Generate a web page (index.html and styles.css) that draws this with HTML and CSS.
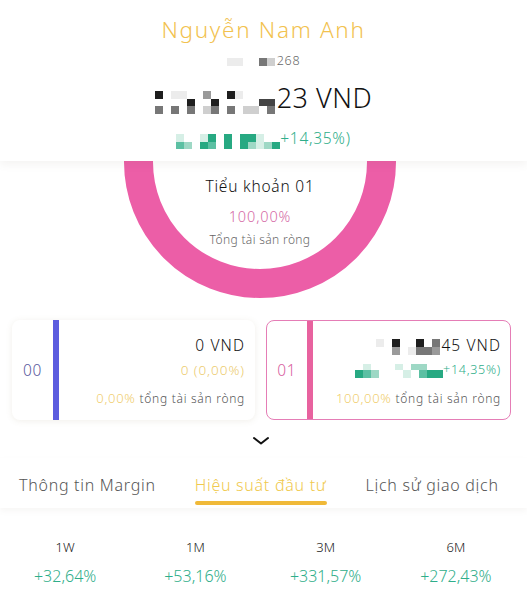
FILE: index.html
```html
<!DOCTYPE html>
<html lang="vi">
<head>
<meta charset="utf-8">
<link rel="stylesheet" href="styles.css">
</head>
<body>
<header class="head">
  <div class="name">Nguyễn Nam Anh</div>
  <div class="acct"><span class="mz mz6"><i class="b"></i><i class="b"></i><i></i><i></i><i class="e"></i><i class="c"></i></span>268</div>
  <div class="total"><span class="mz mz15"><i class="g"></i><i></i><i class="b"></i><i class="b"></i><i></i><i></i><i class="d"></i><i></i><i></i><i class="g"></i><i class="b"></i><i></i><i></i><i></i><i></i><i></i><i></i><i></i><i></i><i class="g"></i><i></i><i></i><i class="g"></i><i></i><i></i><i></i><i></i><i></i><i class="f"></i><i class="f"></i><i class="e"></i><i></i><i class="e"></i><i></i><i class="e"></i><i></i><i class="c"></i><i class="e"></i><i></i><i class="e"></i><i></i><i class="c"></i><i class="c"></i><i></i><i class="e"></i></span>23 VND</div>
  <div class="gain"><span class="mz mz13"><i class="t1"></i><i></i><i></i><i class="t1"></i><i class="t4"></i><i></i><i class="t4"></i><i></i><i class="t4"></i><i class="t4"></i><i class="t1"></i><i></i><i></i><i class="t3"></i><i class="t2"></i><i></i><i class="t4"></i><i class="t3"></i><i></i><i class="t4"></i><i></i><i class="t4"></i><i class="t2"></i><i class="t1"></i><i class="t2"></i><i class="t4"></i></span>+14,35%)</div>
</header>

<section class="donut">
  <div class="donut-title">Tiểu khoản 01</div>
  <div class="donut-pct">100,00%</div>
  <div class="donut-sub">Tổng tài sản ròng</div>
</section>

<section class="cards">
  <div class="card">
    <div class="code code-blue">00</div>
    <div class="bar bar-blue"></div>
    <div class="info">
      <div class="amt">0 VND</div>
      <div class="chg chg-gold">0 (0,00%)</div>
      <div class="share"><span class="gold">0,00%</span> tổng tài sản ròng</div>
    </div>
  </div>
  <div class="card card-active">
    <div class="code code-pink">01</div>
    <div class="bar bar-pink"></div>
    <div class="info">
      <div class="amt"><span class="mz mz8"><i class="b"></i><i></i><i class="g"></i><i></i><i></i><i class="g"></i><i></i><i class="e"></i><i></i><i></i><i class="d"></i><i></i><i class="b"></i><i class="e"></i><i class="e"></i><i class="d"></i></span>45 VND</div>
      <div class="chg chg-green"><span class="mz mz11"><i></i><i class="t1"></i><i></i><i></i><i></i><i class="t1"></i><i></i><i class="t2"></i><i class="t2"></i><i></i><i></i><i class="t4"></i><i class="t3"></i><i class="t2"></i><i></i><i></i><i></i><i class="t1"></i><i></i><i class="t3"></i><i class="t4"></i><i class="t4"></i></span>+14,35%)</div>
      <div class="share"><span class="gold">100,00%</span> tổng tài sản ròng</div>
    </div>
  </div>
</section>

<div class="chev">
  <svg width="18" height="10" viewBox="0 0 18 10"><path d="M2 2 L9 7.5 L16 2" fill="none" stroke="#111" stroke-width="2" stroke-linecap="round" stroke-linejoin="round"/></svg>
</div>

<nav class="tabs">
  <div class="tab">Thông tin Margin</div>
  <div class="tab tab-active">Hiệu suất đầu tư</div>
  <div class="tab">Lịch sử giao dịch</div>
</nav>

<section class="stats">
  <div class="stat"><div class="stat-l">1W</div><div class="stat-v">+32,64%</div></div>
  <div class="stat"><div class="stat-l">1M</div><div class="stat-v">+53,16%</div></div>
  <div class="stat"><div class="stat-l">3M</div><div class="stat-v">+331,57%</div></div>
  <div class="stat"><div class="stat-l">6M</div><div class="stat-v">+272,43%</div></div>
</section>
</body>
</html>
```

FILE: styles.css
```css
* { box-sizing: border-box; }
html, body { margin: 0; padding: 0; background: #fff; }
body {
  font-family: "Noto Sans", Lato, "DejaVu Sans", sans-serif;
  font-weight: 300;
  letter-spacing: 0.045em;
  color: #1a1a1a;
  width: 527px;
  overflow: hidden;
}

/* mosaic (pixelated hidden digits) */
.mz { display: inline-grid; vertical-align: middle; }
.mz i { display: block; }
.mz6 { grid-template-columns: repeat(6, 8px); grid-template-rows: 8px; margin-right: 2px; }
.mz15 { grid-template-columns: repeat(15, 8px); grid-template-rows: 8px 7px 8px; margin-right: 2px; position: relative; top: 2px; }
.mz13 { grid-template-columns: repeat(13, 8px); grid-template-rows: 8px 7px; margin-right: 0; position: relative; top: 2px; }
.mz8 { grid-template-columns: repeat(8, 8px); grid-template-rows: 8px 8px; margin-right: 1px; position: relative; top: 1px; }
.mz11 { grid-template-columns: repeat(11, 8px); grid-template-rows: 6px 8px; position: relative; top: 1px; }
.b { background: #ececec; }
.c { background: #cfcfcf; }
.d { background: #9a9a9a; }
.e { background: #777; }
.f { background: #444; }
.g { background: #1e1e1e; }
.t1 { background: #d6efe6; }
.t2 { background: #9ed8c5; }
.t3 { background: #5cc0a3; }
.t4 { background: #27a982; }

/* header */
.head {
  position: relative;
  z-index: 2;
  background: #fff;
  height: 161px;
  padding-top: 15px;
  text-align: center;
  box-shadow: 0 4px 8px rgba(120, 100, 80, 0.07);
}
.name { font-size: 22.5px; line-height: 30px; color: #f2c24f; letter-spacing: 0.075em; }
.acct { margin-top: 7px; font-size: 12.5px; line-height: 18px; color: #666; }
.total { margin-top: 11px; font-size: 27px; line-height: 34px; color: #111; letter-spacing: 0.02em; }
.gain { margin-top: 12px; font-size: 15.5px; line-height: 22px; color: #2fae8a; }

/* donut */
.donut {
  position: relative;
  z-index: 1;
  width: 272px;
  height: 272px;
  margin: -135px 0 0 124px;
  border: 29px solid #ec5ea7;
  border-radius: 50%;
  padding-top: 121px;
  text-align: center;
}
.donut-title { font-size: 15.5px; line-height: 20px; color: #111; letter-spacing: 0.05em; }
.donut-pct { margin-top: 10px; font-size: 14.5px; line-height: 20px; color: #d56aa6; letter-spacing: 0.06em; }
.donut-sub { margin-top: 6px; font-size: 12px; line-height: 16px; color: #666; letter-spacing: 0.03em; }

/* cards */
.cards {
  display: flex;
  gap: 11px;
  margin-top: 22px;
  padding: 0 16px 0 12px;
}
.card {
  flex: 1;
  height: 100px;
  display: flex;
  background: #fff;
  border-radius: 8px;
  box-shadow: 0 1px 6px rgba(140, 120, 80, 0.12);
}
.card-active {
  border: 1.5px solid #e57db6;
  box-shadow: none;
}
.code {
  width: 41px;
  display: flex;
  align-items: center;
  justify-content: center;
  font-size: 15.5px;
}
.card-active .code { width: 39.5px; }
.code-blue { color: #5b5b9e; }
.code-pink { color: #d860a0; }
.bar { width: 6px; }
.bar-blue { background: #5c5ddf; }
.bar-pink { background: #e8629f; }
.info {
  flex: 1;
  text-align: right;
  padding: 15px 10px 0 0;
}
.card-active .info { padding-top: 13.5px; padding-right: 9px; }
.amt { font-size: 15.5px; line-height: 20px; color: #111; letter-spacing: 0.07em; }
.chg { margin-top: 5px; font-size: 13.5px; line-height: 20px; }
.chg-gold { color: #eccb6e; letter-spacing: 0.07em; }
.chg-green { color: #2fae8a; font-size: 12.5px; }
.share { margin-top: 9px; font-size: 12px; line-height: 18px; color: #555; }
.gold { color: #f0cd6c; font-size: 13px; }

/* chevron */
.chev {
  display: flex;
  justify-content: center;
  margin-top: 16px;
  height: 10px;
}
.chev svg { display: block; margin-left: -6px; }

/* tabs */
.tabs {
  display: flex;
  gap: 39px;
  margin-top: 12px;
  padding: 16px 0 3px 19px;
  box-shadow: 0 3px 6px rgba(120, 100, 80, 0.06);
  position: relative;
}
.tab {
  font-size: 16px;
  line-height: 22px;
  color: #555;
  white-space: nowrap;
  padding-bottom: 9px;
}
.tab-active {
  color: #f0c94e;
  position: relative;
}
.tab-active::after {
  content: "";
  position: absolute;
  left: 0;
  right: 0;
  bottom: 0;
  height: 4px;
  border-radius: 2px;
  background: #f0b938;
}

/* stats */
.stats {
  display: grid;
  grid-template-columns: repeat(4, 1fr);
  padding: 30px 6px 0 0;
  text-align: center;
  letter-spacing: 0;
}
.stat-l { font-size: 13px; line-height: 18px; color: #222; }
.stat-v { margin-top: 9px; font-size: 16px; line-height: 22px; color: #2fae8a; }
```
